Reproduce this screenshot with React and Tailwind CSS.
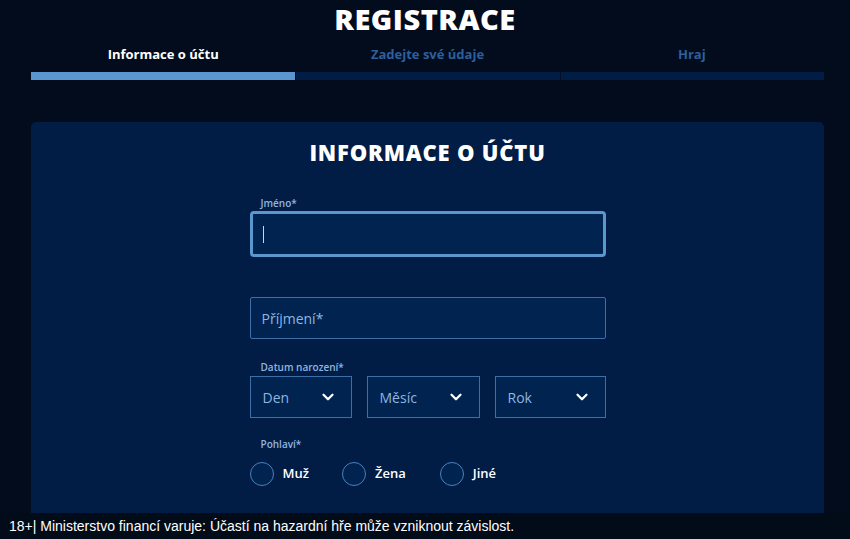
import React from 'react';
import { ChevronDown } from 'lucide-react';

const steps = [
  { label: 'Informace o účtu', active: true },
  { label: 'Zadejte své údaje', active: false },
  { label: 'Hraj', active: false },
];

const font = { fontFamily: '"Open Sans", "Noto Sans", sans-serif' };

const Select = ({ label, width }) => (
  <div className={`${width} h-[42px] border border-[#3c6fa8] bg-[#00234f] flex items-center justify-between pl-3 pr-3`}>
    <span className="text-[14px] text-[#8fb6e0]">{label}</span>
    <ChevronDown size={18} strokeWidth={3} className="text-white mr-[2px]" />
  </div>
);

const Radio = ({ label, gap }) => (
  <label className={`flex items-center gap-[9px] ${gap}`}>
    <span className="w-[24px] h-[24px] rounded-full border-[1.5px] border-[#4b82bf] bg-[#00234f]" />
    <span className="text-[13px] font-semibold text-white">{label}</span>
  </label>
);

export default function App() {
  return (
    <div className="w-[850px] h-[539px] overflow-hidden bg-[#020c1c] relative" style={font}>
      <h1 className="text-center text-white font-extrabold text-[29px] leading-[30px] pt-[4px] tracking-[0.5px]">REGISTRACE</h1>

      <div className="ml-[31px] w-[793px] mt-[12px]">
        <div className="grid grid-cols-3">
          {steps.map((s) => (
            <div key={s.label} className="flex flex-col">
              <div className={`text-center text-[13px] font-bold leading-[16px] ${s.active ? 'text-white' : 'text-[#2d5f9c]'}`}>{s.label}</div>
              <div className={`mt-[10px] h-[8px] ${s.active ? 'bg-[#5b97cf]' : 'bg-[#011c45] border-l border-[#010f26]'}`} />
            </div>
          ))}
        </div>
      </div>

      <div className="ml-[31px] w-[793px] mt-[42px] rounded-[5px] bg-[#011c45] h-[420px] pt-[17px]">
        <h2 className="text-center text-white font-extrabold text-[22px] leading-[26px] tracking-[0.8px]">INFORMACE O ÚČTU</h2>

        <div className="w-[356px] mx-auto mt-[31px] flex flex-col">
          <label className="text-[10px] text-[#8fb6e0] font-semibold pl-[11px] leading-[14px]">Jméno*</label>
          <div className="mt-[1px] h-[46px] rounded-[4px] border-[3px] border-[#5b97cf] bg-[#00234f] flex items-center pl-[10px]">
            <span className="w-[1.5px] h-[17px] bg-[#c9d6e6]" />
          </div>

          <div className="mt-[40px] h-[42px] rounded-[2px] border border-[#3c6fa8] bg-[#00234f] flex items-center pl-[11px]">
            <span className="text-[14px] text-[#8fb6e0]">Příjmení*</span>
          </div>

          <label className="mt-[21px] text-[10px] text-[#8fb6e0] font-semibold pl-[11px] leading-[14px]">Datum narození*</label>
          <div className="mt-[2px] flex gap-[15px]">
            <Select label="Den" width="w-[102px]" />
            <Select label="Měsíc" width="w-[113px]" />
            <Select label="Rok" width="w-[111px]" />
          </div>

          <label className="mt-[19px] text-[10px] text-[#8fb6e0] font-semibold pl-[11px] leading-[14px]">Pohlaví*</label>
          <div className="mt-[11px] flex">
            <Radio label="Muž" gap="mr-[33px]" />
            <Radio label="Žena" gap="mr-[34px]" />
            <Radio label="Jiné" gap="" />
          </div>
        </div>
      </div>

      <div className="fixed left-0 right-0 bottom-0 h-[26px] bg-[#020b18] flex items-center pl-[9px]">
        <span className="text-white text-[14px]" style={{ fontFamily: '"Liberation Sans", Arial, sans-serif' }}>
          18+| Ministerstvo financí varuje: Účastí na hazardní hře může vzniknout závislost.
        </span>
      </div>
    </div>
  );
}
